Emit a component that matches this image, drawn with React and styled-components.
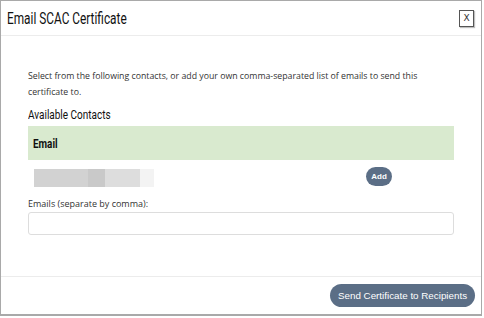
import React from "react"
import styled, { createGlobalStyle } from "styled-components"

const GlobalStyle = createGlobalStyle`
  html, body {
    margin: 0;
    padding: 0;
    background: #fff;
  }
`

const condensed = `"Roboto", "Liberation Sans", sans-serif`
const body = `"Open Sans", "Noto Sans", sans-serif`

const Dialog = styled.div`
  box-sizing: border-box;
  width: 482px;
  height: 316px;
  border: 1px solid #a9a9a9;
  border-bottom-width: 2px;
  display: flex;
  flex-direction: column;
  background: #fff;
`

const Header = styled.div`
  height: 34px;
  border-bottom: 1px solid #ececec;
  display: flex;
  align-items: center;
  justify-content: space-between;
  padding: 0 7px 0 6px;
`

// the original heading face is a narrow one; squeeze Roboto to its width
const Condensed = styled.span`
  display: inline-block;
  transform: scaleX(${p => p.sx || 0.78});
  transform-origin: left center;
  white-space: nowrap;
`

const Title = styled.h1`
  margin: 0;
  font-family: ${condensed};
  font-weight: 400;
  font-size: 16px;
  color: #111;
`

const CloseButton = styled.button`
  width: 15px;
  height: 17px;
  padding: 0;
  border: 1px solid #555;
  background: #fff;
  box-shadow: 1px 1px 1px rgba(0, 0, 0, 0.25);
  font-family: "DejaVu Sans", sans-serif;
  font-size: 9px;
  color: #333;
  display: flex;
  align-items: center;
  justify-content: center;
`

const Body = styled.div`
  flex: 1;
  padding: 32px 27px 0 27px;
  display: flex;
  flex-direction: column;
`

const Intro = styled.p`
  margin: 0;
  font-family: ${body};
  font-size: 8.75px;
  line-height: 16px;
  color: #333;
`

const SectionTitle = styled.h2`
  margin: 6px 0 4px;
  font-family: ${condensed};
  font-weight: 400;
  font-size: 13.5px;
  line-height: 16px;
  color: #111;
`

const TableHead = styled.div`
  height: 34px;
  background: #d9eacf;
  display: flex;
  align-items: center;
  padding: 0 5px;
  font-family: ${condensed};
  font-weight: 700;
  font-size: 13px;
  color: #111;
`

const ContactRow = styled.div`
  height: 36px;
  display: flex;
  align-items: center;
  padding: 0 6px;
`

const Redacted = styled.div`
  width: 120px;
  height: 18px;
  display: flex;
`

const Blur = styled.div`
  width: ${p => p.w}px;
  background: ${p => p.c};
`

const PillButton = styled.button`
  border: none;
  background: #5b6e86;
  color: #fff;
  border-radius: 999px;
  font-family: "Liberation Sans", Arial, sans-serif;
  cursor: pointer;
`

const AddButton = styled(PillButton)`
  margin-left: auto;
  margin-right: 56px;
  margin-bottom: 4px;
  width: 26px;
  height: 19px;
  padding: 0;
  font-size: 8px;
  font-weight: 700;
`

const Label = styled.label`
  font-family: ${body};
  font-size: 9px;
  color: #333;
  line-height: 13px;
  margin-top: 1px;
`

const Input = styled.input`
  box-sizing: border-box;
  height: 23px;
  margin-top: 2px;
  border: 1px solid #ddd;
  border-radius: 3px;
  width: 100%;
`

const Footer = styled.div`
  border-top: 1px solid #ececec;
  height: 37px;
  display: flex;
  align-items: center;
  justify-content: flex-end;
  padding: 0 6px 0 0;
`

const SendButton = styled(PillButton)`
  width: 145px;
  height: 23px;
  font-size: 9.8px;
  padding: 0;
`

const blurs = [
  [54, "#d2d2d2"],
  [17, "#c9c9c9"],
  [35, "#dddddd"],
  [14, "#f3f3f3"],
]

export default function App() {
  return (
    <>
      <GlobalStyle />
      <Dialog>
        <Header>
          <Title><Condensed sx={0.74}>Email SCAC Certificate</Condensed></Title>
          <CloseButton>X</CloseButton>
        </Header>
        <Body>
          <Intro>
            Select from the following contacts, or add your own comma-separated list of emails to send this
            certificate to.
          </Intro>
          <SectionTitle><Condensed sx={0.74}>Available Contacts</Condensed></SectionTitle>
          <TableHead><Condensed sx={0.76}>Email</Condensed></TableHead>
          <ContactRow>
            <Redacted>
              {blurs.map(([w, c], i) => <Blur key={i} w={w} c={c} />)}
            </Redacted>
            <AddButton>Add</AddButton>
          </ContactRow>
          <Label>Emails (separate by comma):</Label>
          <Input />
        </Body>
        <Footer>
          <SendButton>Send Certificate to Recipients</SendButton>
        </Footer>
      </Dialog>
    </>
  )
}
